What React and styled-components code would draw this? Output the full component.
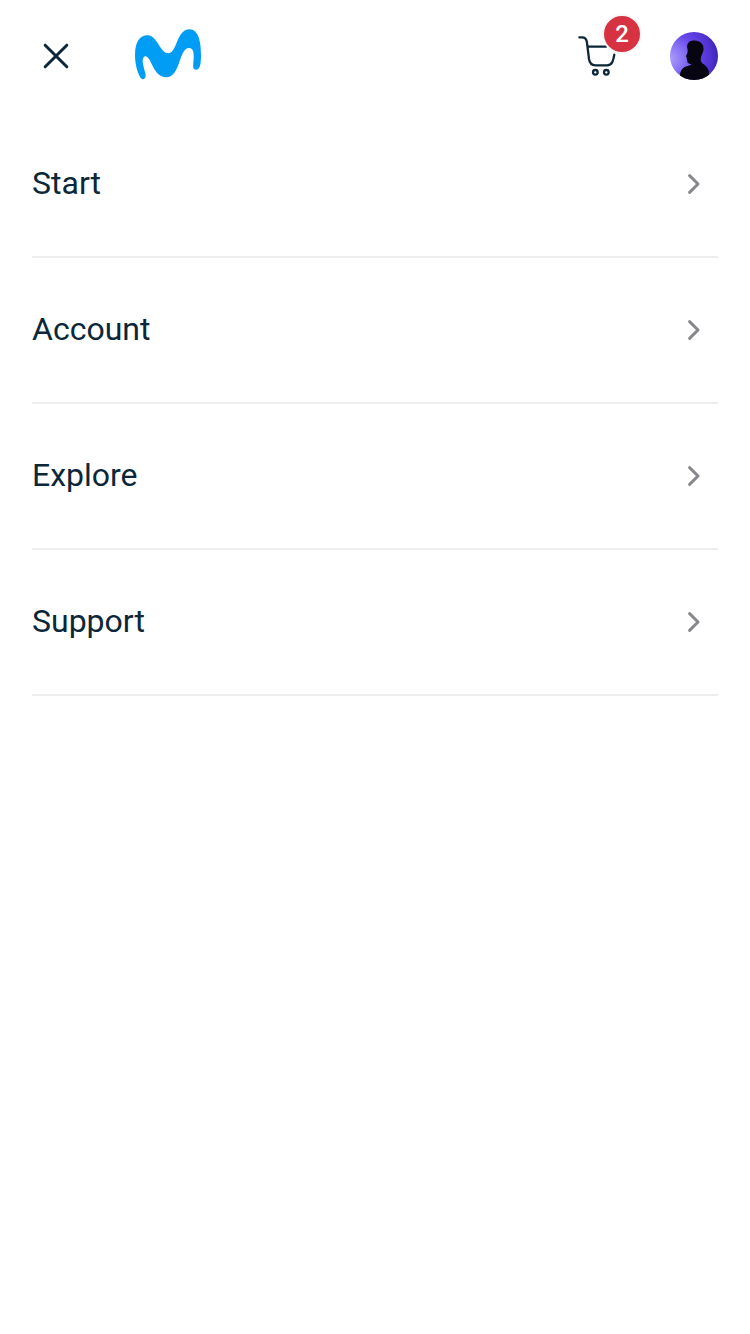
import React from "react";
import styled, { createGlobalStyle } from "styled-components";

const GlobalStyle = createGlobalStyle`
  * { box-sizing: border-box; }
  body { margin: 0; background: #ffffff; font-family: Roboto, "Liberation Sans", sans-serif; }
  button { border: 0; padding: 0; background: none; font: inherit; color: inherit; cursor: pointer; }
`;

const Screen = styled.div`
  min-height: 100vh;
  background: #ffffff;
  color: #0b2739;
`;

const Header = styled.header`
  display: flex;
  align-items: center;
  justify-content: space-between;
  height: 112px;
  padding: 0 32px;
`;

const HeaderGroup = styled.div`
  display: flex;
  align-items: center;
  gap: ${({ $gap }) => $gap}px;
`;

const IconButton = styled.button`
  position: relative;
  width: 48px;
  height: 48px;
  svg { display: block; }
`;

const Logo = styled.svg`
  display: block;
  width: 68px;
  height: 52px;
  margin-bottom: 4px;
`;

const Badge = styled.span`
  position: absolute;
  top: -18px;
  left: 28px;
  width: 40px;
  height: 40px;
  border: 2px solid #f6f6f6;
  border-radius: 50%;
  background: #d73241;
  color: #ffffff;
  font-size: 24px;
  font-weight: 500;
  line-height: 36px;
  text-align: center;
`;

const Menu = styled.nav`
  display: flex;
  flex-direction: column;
  padding: 0 32px;
`;

const MenuRow = styled.button`
  && {
    display: flex;
    align-items: center;
    justify-content: space-between;
    height: 146px;
    border-bottom: 2px solid #eeeeee;
    font-size: 32px;
    line-height: 48px;
    text-align: left;
  }
`;

const Label = styled.span`
  padding-bottom: 2px;
`;

const CloseIcon = () => (
  <svg width="48" height="48" viewBox="0 0 48 48" fill="none" stroke="#0b2739" strokeWidth="3" strokeLinecap="round">
    <path d="M13.2 13.2 34.8 34.8M34.8 13.2 13.2 34.8" />
  </svg>
);

const BrandLogo = () => (
  <Logo viewBox="24 24 204 156" fill="#019df4" aria-label="Movistar">
    <path d="M44 174C34 157 27 132 27 104C27 67 41 46 65 46C94 46 102 100 127 100C153 100 152 28 190 28C218 28 225 67 225 104C225 133 222 149 210 149C200 149 201 137 202.500 122C205 96 201 84 189 84C158 84 164 172 121 172C80 172 77 109 58 109C49 109 49 125 52 136C55 152 59 160 59 168C59 178 49 180 44 174Z" />
  </Logo>
);

const CartIcon = () => (
  <svg width="48" height="48" viewBox="12 72 144 144" fill="none" stroke="#0b2739" strokeWidth="6.8" strokeLinecap="round" strokeLinejoin="round">
    <path d="M28 88H36C46 88 49 93 50.500 101L57 153C59 166 65 172 76 172H111C127 172 130 157 133 140" />
    <path d="M54 116H108" />
    <circle cx="76" cy="193" r="7" />
    <circle cx="109" cy="193" r="7" />
  </svg>
);

const Avatar = () => (
  <svg width="48" height="48" viewBox="0 0 48 48">
    <defs>
      <radialGradient id="backdrop" cx="0" cy=".55" r="1.08">
        <stop offset="0" stopColor="#aa9cfc" />
        <stop offset=".25" stopColor="#8a75f5" />
        <stop offset=".5" stopColor="#6747e8" />
        <stop offset=".78" stopColor="#5133d4" />
        <stop offset="1" stopColor="#351ea0" />
      </radialGradient>
      <clipPath id="disc"><circle cx="24" cy="24" r="24" /></clipPath>
    </defs>
    <g clipPath="url(#disc)">
      <path fill="url(#backdrop)" d="M0 0H48V48H0Z" />
      <path fill="#070512" d="M17.6 17.2C16.6 15 17 12.2 18.6 10.4C20.8 8 25.5 7.9 29 9.4C32.8 11.2 34.2 14.8 33.3 18.8C32.7 21.4 31.2 23.5 30.8 26C30.6 28.5 31 30.1 32.2 31.3C34.6 32.8 37.2 35 38.6 38.5L40.2 48H9.5L10.2 41C11.2 37.8 13.2 35.5 16.4 34.3C18.2 33.6 20.2 33.4 21.4 32.4C20.6 31.6 18.4 31.9 17.7 30.8C17.2 29.9 17.5 28.5 17 27.4L16.7 26.5L16.9 25.5C16.2 25 15.7 24.6 16.1 23.8C16.8 22.4 17.6 21.3 17.6 19.6Z" />
    </g>
  </svg>
);

const Chevron = () => (
  <svg width="48" height="48" viewBox="0 0 48 48" fill="none" stroke="#86888c" strokeWidth="3" strokeLinecap="round" strokeLinejoin="round">
    <path d="M19.6 15.6 28 24 19.6 32.4" />
  </svg>
);

const sections = ["Start", "Account", "Explore", "Support"];

export default function App() {
  return (
    <Screen>
      <GlobalStyle />
      <Header>
        <HeaderGroup $gap={54}>
          <IconButton aria-label="Close menu"><CloseIcon /></IconButton>
          <BrandLogo />
        </HeaderGroup>
        <HeaderGroup $gap={48}>
          <IconButton aria-label="Cart"><CartIcon /><Badge>2</Badge></IconButton>
          <IconButton aria-label="Profile"><Avatar /></IconButton>
        </HeaderGroup>
      </Header>
      <Menu>
        {sections.map((label) => (
          <MenuRow key={label}>
            <Label>{label}</Label>
            <Chevron />
          </MenuRow>
        ))}
      </Menu>
    </Screen>
  );
}
